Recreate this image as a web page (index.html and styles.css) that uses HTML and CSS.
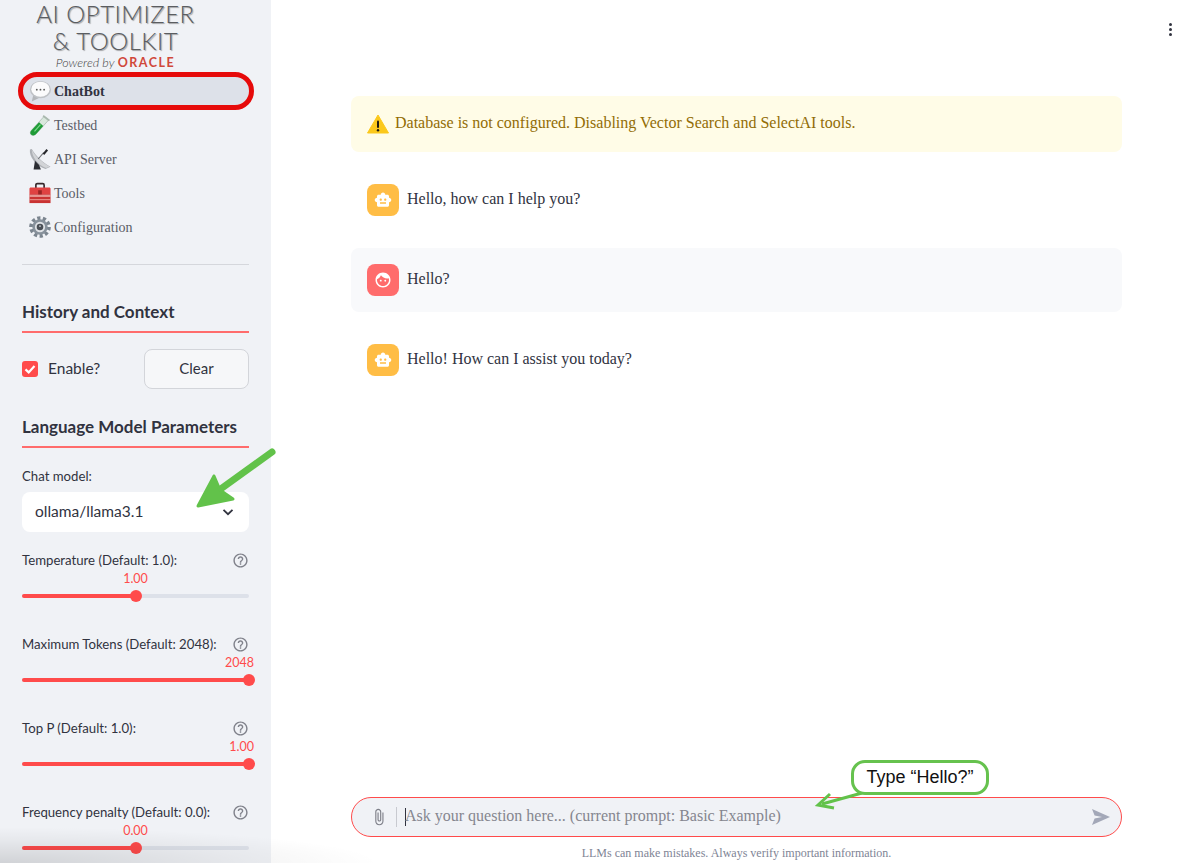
FILE: index.html
```html
<!DOCTYPE html>
<html lang="en">
<head>
    <meta charset="UTF-8">
    <meta name="viewport" content="width=device-width, initial-scale=1.0">
    <title>AI Optimizer &amp; Toolkit</title>
    <link rel="stylesheet" href="styles.css">
</head>
<body>
    <svg class="icon-defs" width="0" height="0">
        <symbol id="i-help" viewBox="0 0 24 24"><path d="M11 18h2v-2h-2v2zm1-16C6.48 2 2 6.48 2 12s4.48 10 10 10 10-4.48 10-10S17.52 2 12 2zm0 18c-4.41 0-8-3.59-8-8s3.59-8 8-8 8 3.59 8 8-3.59 8-8 8zm0-14c-2.21 0-4 1.79-4 4h2c0-1.1.9-2 2-2s2 .9 2 2c0 2-3 1.75-3 5h2c0-2.25 3-2.5 3-5 0-2.21-1.79-4-4-4z"/></symbol>
        <symbol id="i-bot" viewBox="0 0 24 24"><path d="M20 9V7c0-1.1-.9-2-2-2h-3c0-1.66-1.34-3-3-3S9 3.34 9 5H6c-1.1 0-2 .9-2 2v2c-1.66 0-3 1.34-3 3s1.34 3 3 3v4c0 1.1.9 2 2 2h12c1.1 0 2-.9 2-2v-4c1.66 0 3-1.34 3-3s-1.34-3-3-3zM7.5 11.5c0-.83.67-1.5 1.5-1.5s1.5.67 1.5 1.5S9.83 13 9 13s-1.5-.67-1.5-1.5zM16 17H8v-2h8v2zm-1-4c-.83 0-1.5-.67-1.5-1.5S14.17 10 15 10s1.5.67 1.5 1.5S15.83 13 15 13z"/></symbol>
        <symbol id="i-face" viewBox="0 0 24 24"><path d="M9 11.75c-.69 0-1.25.56-1.25 1.25s.56 1.25 1.25 1.25 1.25-.56 1.25-1.25-.56-1.25-1.25-1.25zm6 0c-.69 0-1.25.56-1.25 1.25s.56 1.25 1.25 1.25 1.25-.56 1.25-1.25-.56-1.25-1.25-1.25zM12 2C6.48 2 2 6.48 2 12s4.48 10 10 10 10-4.48 10-10S17.52 2 12 2zm0 18c-4.41 0-8-3.59-8-8 0-.29.02-.58.05-.86 2.36-1.05 4.23-2.98 5.21-5.37C11.07 8.33 14.05 10 17.42 10c.78 0 1.53-.09 2.25-.26.21.71.33 1.47.33 2.26 0 4.41-3.59 8-8 8z"/></symbol>
    </svg>

    <div class="app">
        <aside class="sidebar">
            <div class="logo">
                <div class="logo-title">AI OPTIMIZER</div>
                <div class="logo-title">&amp; TOOLKIT</div>
                <div class="logo-sub"><span class="logo-powered">Powered by</span> <span class="logo-oracle">ORACLE</span></div>
            </div>

            <nav class="nav">
                <a class="nav-item active">
                    <svg class="nav-icon" viewBox="0 0 24 24">
                        <path d="M5 15 L3 23.5 L12 19 Z" fill="#b3b6ba"/>
                        <ellipse cx="12.5" cy="10.5" rx="11.5" ry="9.5" fill="#bfc2c6"/>
                        <ellipse cx="12.5" cy="10" rx="10" ry="8.2" fill="#fbfbfc"/>
                        <circle cx="8.5" cy="10.5" r="1" fill="#555"/><circle cx="12.5" cy="10.5" r="1" fill="#555"/><circle cx="16.5" cy="10.5" r="1" fill="#555"/>
                    </svg>
                    <span>ChatBot</span>
                </a>
                <a class="nav-item">
                    <svg class="nav-icon" viewBox="0 0 24 24">
                        <path d="M3 23 C1 22 1 19.5 2.5 18 L16.5 2.5 L21.5 6.5 L8 21.5 C6.5 23.2 4.5 23.8 3 23 Z" fill="#d9e8dd" stroke="#8fa596" stroke-width="0.6"/>
                        <path d="M3 23 C1 22 1 19.5 2.5 18 L11 9 L15.5 13 L8 21.5 C6.5 23.2 4.5 23.8 3 23 Z" fill="#1f9b37"/>
                        <path d="M6 19 L12.5 11.5" stroke="#7fdc8f" stroke-width="1.2"/>
                        <path d="M16 1 L23 6.5 L21.5 8 L14.8 2.6 Z" fill="#a9b8ae"/>
                    </svg>
                    <span>Testbed</span>
                </a>
                <a class="nav-item">
                    <svg class="nav-icon" viewBox="0 0 24 24">
                        <path d="M1 1.5 C0 9 7 19 18 23 L23.5 20.5 C14 15 8 9 3 1 Z" fill="#aeb1b6"/>
                        <path d="M3 2 C6 8 13 15 22.5 20.5 L18.5 21.8 C9 18 3.5 10 3 2 Z" fill="#d2d4d7"/>
                        <path d="M10 12 L16 5" stroke="#6d6f74" stroke-width="1.2"/>
                        <path d="M15 6 L19 1 L20.8 2.6 L16.6 7.5 Z" fill="#26272b"/>
                        <path d="M5 23.5 L6.5 14 L11 18.5 L13 23.5 Z" fill="#2b2d33"/>
                    </svg>
                    <span>API Server</span>
                </a>
                <a class="nav-item">
                    <svg class="nav-icon" viewBox="0 0 24 24">
                        <path d="M7.5 7 V3.2 C7.5 2.3 8.2 1.7 9 1.7 H15 C15.8 1.7 16.5 2.3 16.5 3.2 V7" fill="none" stroke="#37292c" stroke-width="1.8"/>
                        <path d="M0.5 7.5 C0.5 6.6 1.1 6 2 6 H22 C22.9 6 23.5 6.6 23.5 7.5 V13.5 H0.5 Z" fill="#e04242"/>
                        <rect x="0.5" y="13.5" width="23" height="9.5" fill="#c93333"/>
                        <rect x="0.5" y="14.5" width="23" height="1.5" fill="#f3c1bb"/>
                        <rect x="0.5" y="18.8" width="23" height="1" fill="#ef9f97"/>
                        <rect x="10" y="9" width="4" height="4.5" fill="#9a2424"/>
                    </svg>
                    <span>Tools</span>
                </a>
                <a class="nav-item">
                    <svg class="nav-icon" viewBox="0 0 24 24">
                        <circle cx="12" cy="12" r="9.6" fill="none" stroke="#7b858f" stroke-width="4.4" stroke-dasharray="3.4 2.6"/>
                        <circle cx="12" cy="12" r="8.4" fill="#87919b"/>
                        <circle cx="12" cy="12" r="5.6" fill="#dfe2e6"/>
                        <circle cx="12" cy="12" r="3.6" fill="#4a4f56"/>
                        <circle cx="12" cy="11" r="1" fill="#c9ccd0"/>
                    </svg>
                    <span>Configuration</span>
                </a>
            </nav>

            <hr class="divider">

            <h3 class="section-title first">History and Context</h3>
            <div class="history-row">
                <label class="check">
                    <span class="check-box">
                        <svg viewBox="0 0 16 16" width="16" height="16"><path d="M3.5 8.4 L6.7 11.4 L12.5 5" fill="none" stroke="#fff" stroke-width="2.2"/></svg>
                    </span>
                    <span class="nudge-up">Enable?</span>
                </label>
                <button class="btn-clear">Clear</button>
            </div>

            <h3 class="section-title second">Language Model Parameters</h3>
            <div class="field-label model-label">Chat model:</div>
            <div class="select">
                <span class="nudge-up">ollama/llama3.1</span>
                <svg viewBox="0 0 12 12" width="12" height="12"><path d="M1.5 3.8 L6 8.2 L10.5 3.8" fill="none" stroke="#31333f" stroke-width="1.8"/></svg>
            </div>

            <div class="slider first-slider">
                <div class="slider-head"><span class="field-label">Temperature (Default: 1.0):</span><svg class="help"><use href="#i-help"/></svg></div>
                <div class="slider-value">1.00</div>
                <div class="track"><div class="fill" style="width: 50%"></div><div class="thumb"></div></div>
            </div>
            <div class="slider">
                <div class="slider-head"><span class="field-label">Maximum Tokens (Default: 2048):</span><svg class="help"><use href="#i-help"/></svg></div>
                <div class="slider-value at-end">2048</div>
                <div class="track"><div class="fill" style="width: 100%"></div><div class="thumb"></div></div>
            </div>
            <div class="slider">
                <div class="slider-head"><span class="field-label">Top P (Default: 1.0):</span><svg class="help"><use href="#i-help"/></svg></div>
                <div class="slider-value at-end">1.00</div>
                <div class="track"><div class="fill" style="width: 100%"></div><div class="thumb"></div></div>
            </div>
            <div class="slider">
                <div class="slider-head"><span class="field-label">Frequency penalty (Default: 0.0):</span><svg class="help"><use href="#i-help"/></svg></div>
                <div class="slider-value">0.00</div>
                <div class="track"><div class="fill" style="width: 50%"></div><div class="thumb"></div></div>
            </div>
        </aside>

        <main class="main">
            <div class="toolbar">
                <div class="kebab"><i></i><i></i><i></i></div>
            </div>

            <div class="alert">
                <svg class="alert-icon" viewBox="0 0 22 20" width="22" height="20">
                    <path d="M11 1 L21.5 19 H0.5 Z" fill="#fbc81c" stroke="#fbc81c" stroke-width="1" stroke-linejoin="round"/>
                    <rect x="10" y="6.5" width="2" height="7.5" rx="1" fill="#1e1a10"/>
                    <circle cx="11" cy="16.3" r="1.2" fill="#1e1a10"/>
                </svg>
                <span>Database is not configured. Disabling Vector Search and SelectAI tools.</span>
            </div>

            <div class="message">
                <div class="avatar bot"><svg><use href="#i-bot"/></svg></div>
                <p>Hello, how can I help you?</p>
            </div>
            <div class="message user">
                <div class="avatar human"><svg><use href="#i-face"/></svg></div>
                <p>Hello?</p>
            </div>
            <div class="message">
                <div class="avatar bot"><svg><use href="#i-bot"/></svg></div>
                <p>Hello! How can I assist you today?</p>
            </div>

            <div class="chat-input">
                <svg class="attach" viewBox="0 0 24 24"><path d="M16.5 6v11.5c0 2.21-1.79 4-4 4s-4-1.79-4-4V5c0-1.38 1.12-2.5 2.5-2.5s2.5 1.12 2.5 2.5v10.5c0 .55-.45 1-1 1s-1-.45-1-1V6H10v9.5c0 1.38 1.12 2.5 2.5 2.5s2.5-1.12 2.5-2.5V5c0-2.21-1.79-4-4-4S7 2.79 7 5v12.5c0 3.04 2.46 5.5 5.5 5.5s5.5-2.46 5.5-5.5V6h-1.5z"/></svg>
                <span class="input-sep"></span>
                <span class="caret"></span>
                <span class="placeholder">Ask your question here... (current prompt: Basic Example)</span>
                <svg class="send" viewBox="0 0 18 16"><path d="M0 0 L18 8 L0 16 L2.6 9.6 L10 8 L2.6 6.4 Z"/></svg>
            </div>
            <div class="disclaimer">LLMs can make mistakes. Always verify important information.</div>
        </main>
    </div>

    <!-- annotations drawn on top of the screenshot -->
    <div class="corner-shade"></div>
    <div class="ring-chatbot"></div>
    <svg class="arrow-overlay" width="1199" height="863" viewBox="0 0 1199 863">
        <path d="M272 452 L204 501" stroke="#62c24a" stroke-width="7" stroke-linecap="round"/>
        <path d="M214 476 L198 506 L233 499 L220 490 Z" fill="#62c24a" stroke="#62c24a" stroke-width="3" stroke-linejoin="round"/>
        <path d="M862 793 L822 804" stroke="#62c24a" stroke-width="3"/>
        <path d="M830 794 L818 805 L834 808" fill="none" stroke="#62c24a" stroke-width="3"/>
    </svg>
    <div class="callout">Type “Hello?”</div>
</body>
</html>
```

FILE: styles.css
```css
* {
    box-sizing: border-box;
}
html, body {
    margin: 0;
    height: 100%;
    overflow: hidden;
}
body {
    position: relative;
    font-family: "Liberation Serif", serif;
    color: #31333f;
    background: #fff;
}
.icon-defs {
    position: absolute;
}
.app {
    display: flex;
    height: 863px;
}

/* sidebar */
.sidebar {
    width: 271px;
    flex-shrink: 0;
    height: 863px;
    padding: 0 22px;
    background: #f0f2f6;
    overflow: hidden;
    font-family: "Lato", sans-serif;
}
.logo {
    height: 77px;
    margin-right: 40px;
    text-align: center;
    color: #5b5d60;
}
.logo-title {
    font-weight: 300;
    font-size: 24px;
    line-height: 27px;
    letter-spacing: 0.5px;
    text-shadow: 1px 1px 1px rgba(0,0,0,0.35);
    white-space: nowrap;
}
.logo-sub {
    margin-top: 2px;
    font-size: 12.5px;
    line-height: 14px;
    white-space: nowrap;
}
.logo-powered {
    font-style: italic;
    font-weight: 300;
    color: #3f3f3f;
}
.logo-oracle {
    color: #d0483a;
    font-weight: 700;
    letter-spacing: 1.5px;
}
.nav {
    display: flex;
    flex-direction: column;
    gap: 6px;
}
.nav-item {
    display: flex;
    align-items: center;
    gap: 3px;
    height: 28px;
    padding-left: 7px;
    border-radius: 14px;
    font-family: "Liberation Serif", serif;
    font-size: 14px;
    color: #5a5c66;
}
.nav-item span {
    padding-top: 2px;
}
.nav-item.active {
    background: #dde1e9;
    color: #31333f;
    font-weight: 700;
}
.nav-icon {
    width: 22px;
    height: 22px;
    flex-shrink: 0;
}
.divider {
    margin: 23px 0 35px;
    border: none;
    border-top: 1px solid #d5d7dc;
}
.section-title {
    margin: 0;
    padding-bottom: 7px;
    border-bottom: 2px solid #ff6c6c;
    font-size: 17px;
    font-weight: 700;
    line-height: 24px;
    white-space: nowrap;
}
.section-title.second {
    margin-top: 26px;
}
.history-row {
    display: flex;
    align-items: center;
    justify-content: space-between;
    margin-top: 16px;
    height: 40px;
}
.check {
    display: flex;
    align-items: center;
    gap: 10px;
    font-size: 15.5px;
}
.check-box {
    display: block;
    width: 16px;
    height: 16px;
    border-radius: 3px;
    background: #ff4b4b;
}
.check-box svg {
    display: block;
}
.nudge-up {
    padding-bottom: 2px;
}
.btn-clear {
    width: 105px;
    height: 40px;
    padding: 0 0 2px;
    border: 1px solid #d3d5da;
    border-radius: 8px;
    background: #f6f7f9;
    font-family: inherit;
    font-size: 15px;
    color: #31333f;
}
.field-label {
    font-size: 13.2px;
    line-height: 20px;
    white-space: nowrap;
}
.model-label {
    margin-top: 18px;
}
.select {
    display: flex;
    align-items: center;
    justify-content: space-between;
    height: 40px;
    margin-top: 6px;
    padding: 0 15px 0 13px;
    border-radius: 8px;
    background: #fff;
    font-size: 15.5px;
}
.slider {
    height: 84px;
}
.first-slider {
    margin-top: 18px;
}
.slider-head {
    display: flex;
    justify-content: space-between;
    align-items: center;
    height: 20px;
}
.help {
    width: 17px;
    height: 17px;
    fill: #7f818a;
}
.slider-value {
    height: 16px;
    font-size: 12.5px;
    line-height: 18px;
    text-align: center;
    color: #ff4b4b;
}
.slider-value.at-end {
    text-align: right;
    margin-right: -5px;
}
.track {
    position: relative;
    display: flex;
    height: 4px;
    margin-top: 8px;
    border-radius: 2px;
    background: #dde1e9;
}
.fill {
    flex-shrink: 0;
    height: 4px;
    border-radius: 2px;
    background: #ff4b4b;
}
.thumb {
    flex-shrink: 0;
    width: 12px;
    height: 12px;
    margin: -4px 0 0 -6px;
    border-radius: 50%;
    background: #ff4b4b;
}

/* main area */
.main {
    flex: 1;
    display: flex;
    flex-direction: column;
    min-width: 0;
    padding: 0 77px 0 80px;
}
.toolbar {
    display: flex;
    justify-content: flex-end;
    height: 96px;
    padding-top: 23px;
    margin-right: -50px;
}
.kebab {
    display: flex;
    flex-direction: column;
    gap: 2px;
    height: 13px;
}
.kebab i {
    display: block;
    width: 3px;
    height: 3px;
    border-radius: 50%;
    background: #31333f;
}
.alert {
    display: flex;
    align-items: center;
    gap: 6px;
    height: 56px;
    padding-left: 16px;
    border-radius: 8px;
    background: #fffce7;
    color: #926c05;
    font-size: 16px;
}
.alert span {
    padding-bottom: 2px;
}
.message {
    display: flex;
    align-items: center;
    gap: 8px;
    height: 64px;
    margin-top: 16px;
    padding: 0 16px;
    border-radius: 8px;
    font-size: 16px;
}
.message p {
    margin: 0 0 2px;
}
.message.user {
    background: #f8f9fb;
}
.avatar {
    display: flex;
    align-items: center;
    justify-content: center;
    width: 32px;
    height: 32px;
    border-radius: 8px;
    fill: #fff;
}
.avatar svg {
    width: 18px;
    height: 18px;
}
.avatar.bot {
    background: #ffbd45;
}
.avatar.human {
    background: #ff6c6c;
}
.chat-input {
    display: flex;
    align-items: center;
    height: 40px;
    margin-top: auto;
    padding: 0 11px 0 18px;
    border: 1px solid #ff4b4b;
    border-radius: 20px;
    background: #f0f2f6;
    font-size: 16px;
}
.attach {
    width: 18px;
    height: 18px;
    fill: #7d7f88;
}
.input-sep {
    width: 1px;
    height: 20px;
    margin-left: 8px;
    background: #c8cad0;
}
.caret {
    width: 1px;
    height: 18px;
    margin-left: 8px;
    background: #31333f;
}
.placeholder {
    flex: 1;
    margin-left: -1px;
    padding-bottom: 2px;
    color: #85868f;
}
.send {
    width: 18px;
    height: 16px;
    fill: #a3a8b8;
}
.disclaimer {
    height: 26px;
    font-size: 12px;
    line-height: 32px;
    text-align: center;
    color: #808495;
}

/* annotations */
.corner-shade {
    position: absolute;
    left: 0;
    bottom: 0;
    width: 380px;
    height: 36px;
    background: radial-gradient(ellipse farthest-side at 0% 100%, rgba(0,0,0,0.13), rgba(0,0,0,0.04) 65%, rgba(0,0,0,0));
    pointer-events: none;
}
.ring-chatbot {
    position: absolute;
    left: 18px;
    top: 72px;
    width: 236px;
    height: 38px;
    border: 5px solid #e60a0a;
    border-radius: 19px;
}
.arrow-overlay {
    position: absolute;
    left: 0;
    top: 0;
    pointer-events: none;
}
.callout {
    position: absolute;
    left: 851px;
    top: 760px;
    width: 138px;
    height: 35px;
    border: 3px solid #66c24e;
    border-radius: 14px;
    background: #fff;
    font-family: "Liberation Sans", sans-serif;
    font-size: 18px;
    line-height: 28px;
    text-align: center;
    color: #111;
}
```
